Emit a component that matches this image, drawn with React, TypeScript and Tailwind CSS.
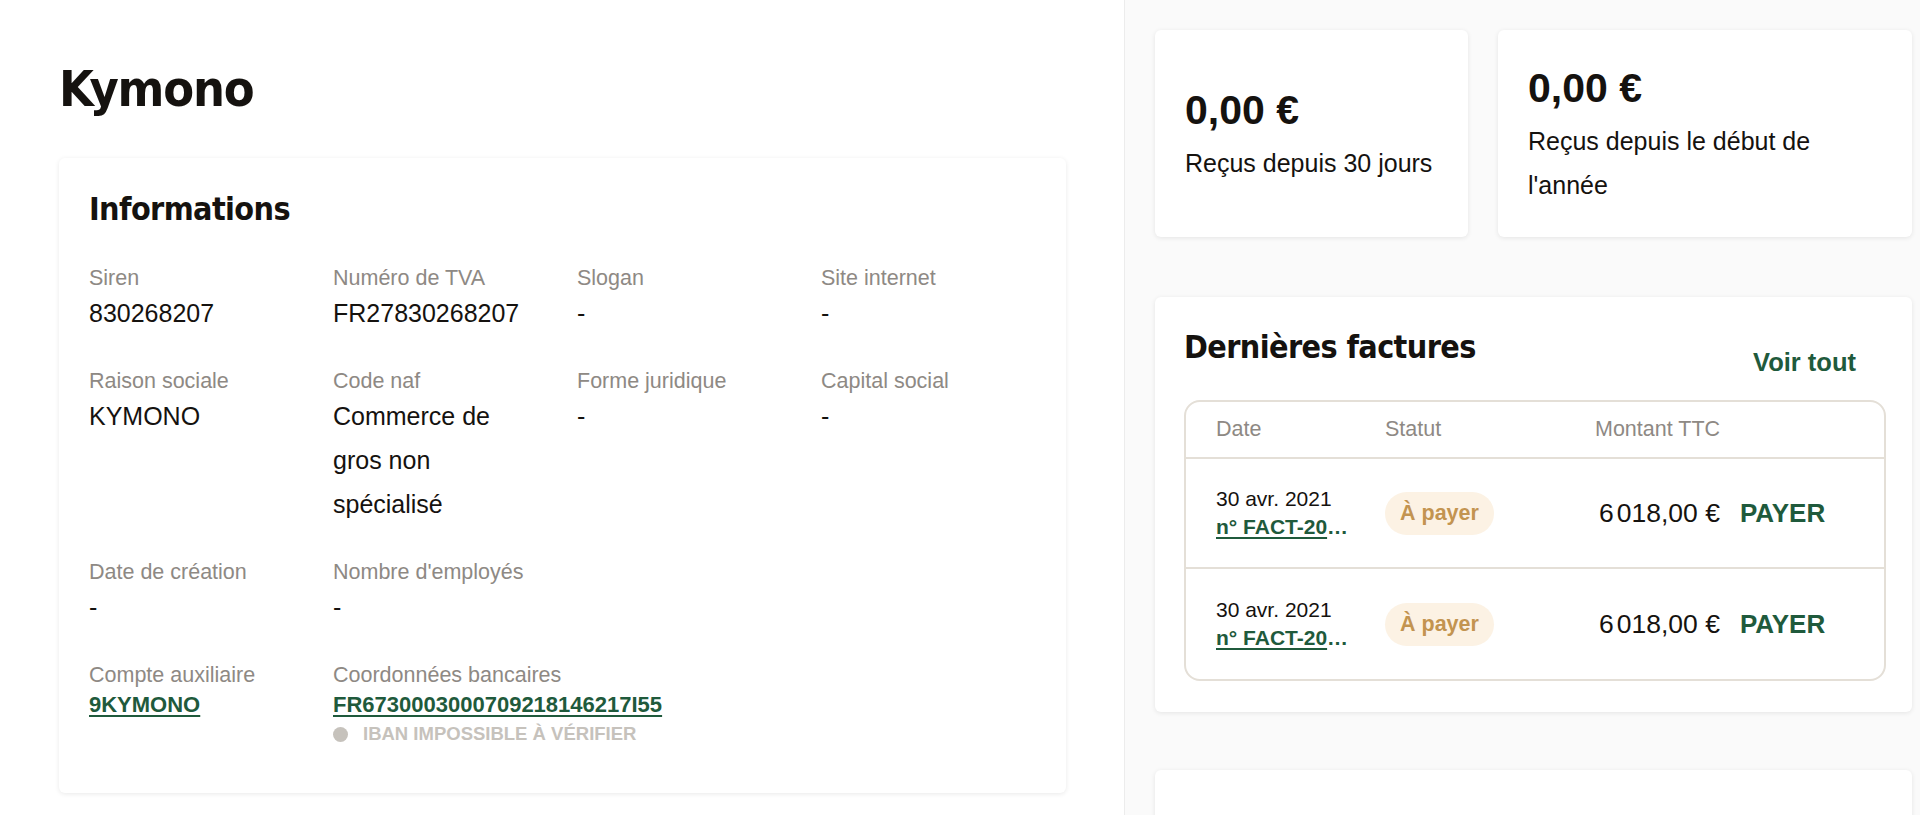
import React from 'react';

const fields = [
  { label: 'Siren', value: '830268207' },
  { label: 'Numéro de TVA', value: 'FR27830268207' },
  { label: 'Slogan', value: '-' },
  { label: 'Site internet', value: '-' },
  { label: 'Raison sociale', value: 'KYMONO' },
  { label: 'Code naf', value: 'Commerce de gros non spécialisé' },
  { label: 'Forme juridique', value: '-' },
  { label: 'Capital social', value: '-' },
  { label: 'Date de création', value: '-' },
  { label: "Nombre d'employés", value: '-' },
];

const invoices = [
  { date: '30 avr. 2021', number: 'n° FACT-20' },
  { date: '30 avr. 2021', number: 'n° FACT-20' },
];

const Label = ({ children }: { children: React.ReactNode }) => (
  <div className="text-[21.5px] leading-[25px] text-[#8e8984]">{children}</div>
);

const StatCard = ({ amount, text, className }: { amount: string; text: string; className: string }) => (
  <div className={`flex flex-col justify-center rounded-[6px] bg-white px-[30px] py-[30px] shadow-[0_1px_5px_rgba(0,0,0,0.09)] ${className}`}>
    <div className="mb-[3px] text-[41px] font-bold leading-[56px] text-[#15120f]">{amount}</div>
    <div className="text-[25px] leading-[44px] text-[#15120f]">{text}</div>
  </div>
);

export default function App() {
  return (
    <div className="flex h-[815px] overflow-hidden bg-white font-['Liberation_Sans',Arial,sans-serif]">
      {/* left column */}
      <div className="w-[1125px] shrink-0 border-r border-[#ececec] bg-white pl-[59px] pr-[58px] pt-[55px]">
        <h1 className="font-['DejaVu_Sans_Condensed',sans-serif] text-[50px] font-bold leading-[68px] tracking-[-1.2px] text-[#15120f]">
          Kymono
        </h1>

        <div className="mt-[35px] rounded-[6px] bg-white px-[30px] pb-[46px] pt-[30px] shadow-[0_1px_5px_rgba(0,0,0,0.09)]">
          <h2 className="font-['DejaVu_Sans_Condensed',sans-serif] text-[32px] font-bold leading-[43px] tracking-[-0.6px] text-[#15120f]">
            Informations
          </h2>

          <div className="mt-[35px] grid grid-cols-[repeat(4,200px)] gap-x-[44px] gap-y-[34px]">
            {fields.map((f) => (
              <div key={f.label}>
                <Label>{f.label}</Label>
                <div className="text-[25px] leading-[44px] text-[#15120f]">{f.value}</div>
              </div>
            ))}

            <div className="col-start-1">
              <Label>Compte auxiliaire</Label>
              <a href="#" className="text-[22px] font-bold leading-[33px] text-[#1f5a3c] underline decoration-[2px] underline-offset-[3px]">
                9KYMONO
              </a>
            </div>
            <div className="col-span-2">
              <Label>Coordonnées bancaires</Label>
              <a href="#" className="text-[22px] font-bold leading-[33px] text-[#1f5a3c] underline decoration-[2px] underline-offset-[3px]">
                FR6730003000709218146217I55
              </a>
              <div className="flex items-center gap-[15px] text-[18.5px] font-bold uppercase leading-[26px] text-[#c6c2bc]">
                <span className="h-[15px] w-[15px] rounded-full bg-[#c6c2bc]" />
                IBAN impossible à vérifier
              </div>
            </div>
          </div>
        </div>
      </div>

      {/* right column */}
      <div className="flex-1 bg-[#fafafa] pl-[30px] pr-[8px] pt-[30px]">
        <div className="flex gap-[30px]">
          <StatCard amount="0,00 €" text="Reçus depuis 30 jours" className="w-[313px] shrink-0" />
          <StatCard amount="0,00 €" text="Reçus depuis le début de l'année" className="flex-1" />
        </div>

        <div className="mt-[60px] rounded-[6px] bg-white pb-[31px] pl-[29px] pr-[26px] pt-[29px] shadow-[0_1px_5px_rgba(0,0,0,0.09)]">
          <div className="flex items-start justify-between">
            <h2 className="font-['DejaVu_Sans_Condensed',sans-serif] text-[32px] font-bold leading-[43px] tracking-[-0.6px] text-[#15120f]">
              Dernières factures
            </h2>
            <button className="mt-[21px] pr-[30px] text-[25.5px] font-bold leading-[30px] text-[#1f5a3c]">Voir tout</button>
          </div>

          <div className="mt-[23px] overflow-hidden rounded-[16px] border-2 border-[#e4dfd7]">
            <div className="flex h-[57px] items-center border-b-2 border-[#e4dfd7] pl-[30px] text-[21.5px] text-[#8e8984]">
              <div className="w-[169px]">Date</div>
              <div className="w-[210px]">Statut</div>
              <div>Montant TTC</div>
            </div>
            {invoices.map((inv, i) => (
              <div
                key={i}
                className={`flex h-[110px] items-center pl-[30px] ${i < invoices.length - 1 ? 'border-b-2 border-[#e4dfd7]' : ''}`}
              >
                <div className="w-[169px]">
                  <div className="text-[21px] leading-[28px] text-[#15120f]">{inv.date}</div>
                  <div className="text-[21px] font-bold leading-[28px] text-[#1f5a3c]">
                    <a href="#" className="underline decoration-[2px] underline-offset-[3px]">{inv.number}</a>…
                  </div>
                </div>
                <div className="w-[214px]">
                  <span className="inline-block rounded-full bg-[#fcf2e4] px-[15px] text-[21.5px] font-bold leading-[43px] text-[#c39450]">
                    À payer
                  </span>
                </div>
                <div className="text-[26.5px] leading-[30px] text-[#15120f]">
                  6<span className="ml-[3px]">018,00&nbsp;€</span>
                </div>
                <button className="ml-[20px] text-[26px] font-bold leading-[30px] text-[#1f5a3c]">PAYER</button>
              </div>
            ))}
          </div>
        </div>

        <div className="mt-[58px] h-[200px] rounded-[6px] bg-white shadow-[0_1px_5px_rgba(0,0,0,0.09)]" />
      </div>
    </div>
  );
}
